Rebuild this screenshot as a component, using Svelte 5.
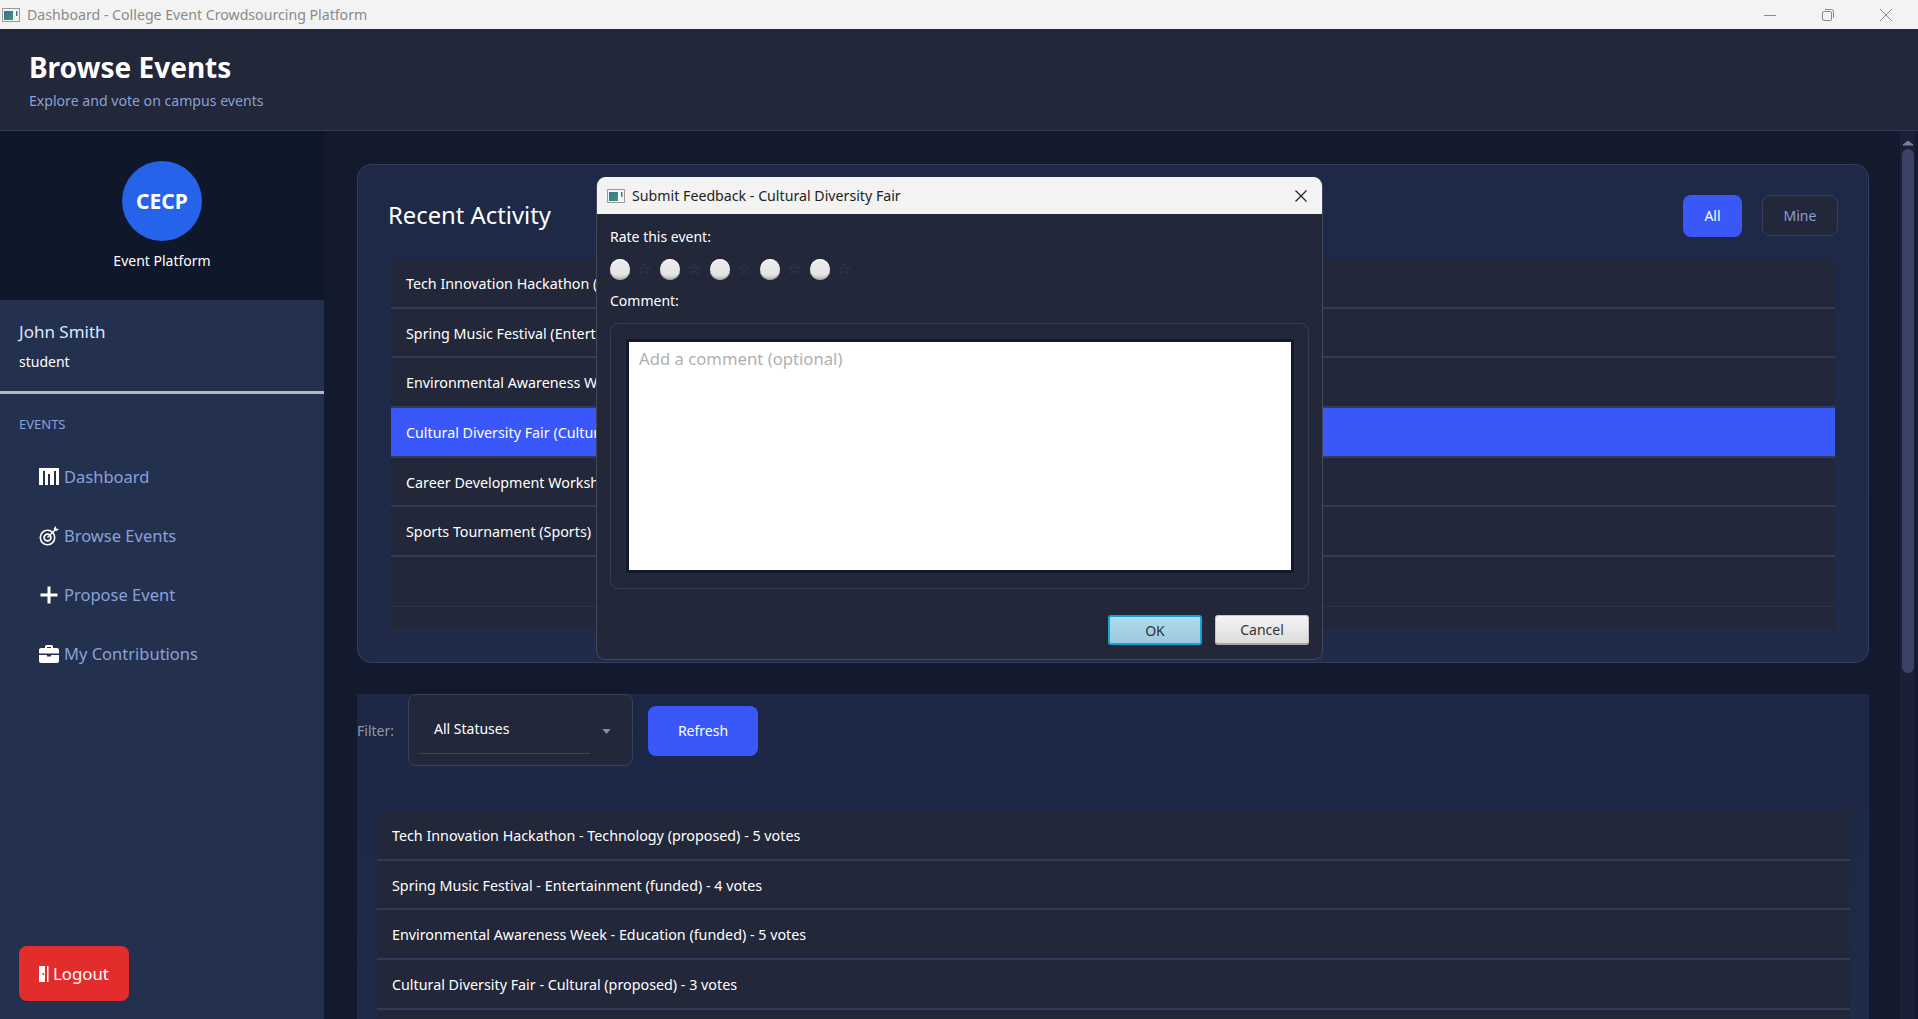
<script>
  const recent = [
    'Tech Innovation Hackathon (Technology)',
    'Spring Music Festival (Entertainment)',
    'Environmental Awareness Week (Education)',
    'Cultural Diversity Fair (Cultural)',
    'Career Development Workshop (Education)',
    'Sports Tournament (Sports)',
    ''
  ];
  const events = [
    'Tech Innovation Hackathon - Technology (proposed) - 5 votes',
    'Spring Music Festival - Entertainment (funded) - 4 votes',
    'Environmental Awareness Week - Education (funded) - 5 votes',
    'Cultural Diversity Fair - Cultural (proposed) - 3 votes',
    ''
  ];
  const stars = [1, 2, 3, 4, 5];
</script>

{#snippet appIcon()}
  <svg class="appicon" viewBox="0 0 18 14" width="18" height="14">
    <defs>
      <linearGradient id="ai" x1="0" y1="0" x2="1" y2="1">
        <stop offset="0" stop-color="#3a6ea5" />
        <stop offset="1" stop-color="#3f9a6a" />
      </linearGradient>
    </defs>
    <rect x="0.5" y="0.5" width="17" height="13" fill="#f4f4f4" stroke="#9a9a9a" />
    <rect x="2" y="3" width="9" height="9" fill="url(#ai)" />
    <rect x="14" y="3" width="1.5" height="5" fill="#3f7a8a" />
  </svg>
{/snippet}

<div class="window">
  <div class="titlebar">
    {@render appIcon()}
    <span class="wintitle">Dashboard - College Event Crowdsourcing Platform</span>
    <div class="winctl">
      <svg width="14" height="14" viewBox="0 0 14 14"><path d="M1 7.5h12" stroke="#8a8a8a" fill="none" /></svg>
      <svg width="14" height="14" viewBox="0 0 14 14"><rect x="1.5" y="3.5" width="9" height="9" rx="1.5" stroke="#8a8a8a" fill="none" /><path d="M4 1.5h6.5a2 2 0 0 1 2 2V10" stroke="#8a8a8a" fill="none" /></svg>
      <svg width="14" height="14" viewBox="0 0 14 14"><path d="M1 1l12 12M13 1L1 13" stroke="#8a8a8a" fill="none" /></svg>
    </div>
  </div>

  <header class="header">
    <h1>Browse Events</h1>
    <p>Explore and vote on campus events</p>
  </header>

  <div class="body">
    <aside class="sidebar">
      <div class="brand">
        <div class="logo">CECP</div>
        <div class="brandname">Event Platform</div>
      </div>
      <div class="user">
        <div class="uname">John Smith</div>
        <div class="urole">student</div>
      </div>
      <div class="section">EVENTS</div>
      <nav class="nav">
        <div class="navitem">
          <svg viewBox="0 0 20 17" width="20" height="17"><path fill="#fff" d="M0 0h20v17h-3V3h-2v14h-4V6H9v11H6V3H4v14H0z" /></svg>
          <span>Dashboard</span>
        </div>
        <div class="navitem">
          <svg viewBox="0 0 20 20" width="20" height="20"><circle cx="8.500" cy="11.500" r="7.200" fill="none" stroke="#fff" stroke-width="1.600" /><circle cx="8.500" cy="11.500" r="3.400" fill="none" stroke="#fff" stroke-width="1.800" /><path d="M8.500 11.500L16 4" stroke="#fff" stroke-width="1.400" /><path d="M14.500 3l2-3 .8 2.500 2.700.8-3 2z" fill="#fff" /></svg>
          <span>Browse Events</span>
        </div>
        <div class="navitem">
          <svg viewBox="0 0 20 20" width="20" height="20"><path fill="#fff" d="M8.500 1.500h3V8.500H18.500v3H11.500V18.500h-3V11.500H1.500v-3H8.500z" /></svg>
          <span>Propose Event</span>
        </div>
        <div class="navitem">
          <svg viewBox="0 0 20 18" width="20" height="18"><path fill="#fff" d="M6 3V1.500A1.500 1.500 0 0 1 7.500 0h5A1.500 1.500 0 0 1 14 1.500V3h4a2 2 0 0 1 2 2v3.500H0V5a2 2 0 0 1 2-2zm2 0h4V2H8zM0 10h8v1.500h4V10h8v6a2 2 0 0 1-2 2H2a2 2 0 0 1-2-2z" /></svg>
          <span>My Contributions</span>
        </div>
      </nav>
      <button class="logout">
        <svg viewBox="0 0 10 16" width="10" height="16"><path fill="#fff" d="M0 0h6v16H0zM8 0h1.500v16H8z" /><rect x="3.500" y="7" width="1.500" height="2" fill="#e32d2d" /></svg>
        <span>Logout</span>
      </button>
    </aside>

    <main class="main">
      <div class="content">
        <section class="card">
          <div class="cardhead">
            <h2>Recent Activity</h2>
            <div class="toggles">
              <button class="primary all">All</button>
              <button class="ghost">Mine</button>
            </div>
          </div>
          <ul class="list recent">
            {#each recent as r, i}
              <li class:sel={i === 3}>{r}</li>
            {/each}
          </ul>
        </section>

        <section class="events">
          <div class="filter">
            <span class="flabel">Filter:</span>
            <div class="select">
              <div class="selval"><span>All Statuses</span></div>
              <svg class="caret" width="9" height="5" viewBox="0 0 10 6"><path d="M0 0h10L5 6z" fill="#8b8f9e" /></svg>
            </div>
            <button class="primary refresh">Refresh</button>
          </div>
          <ul class="list evlist">
            {#each events as e}
              <li>{e}</li>
            {/each}
          </ul>
        </section>
      </div>
      <div class="scrollbar">
        <svg width="12" height="8" viewBox="0 0 12 8"><path d="M1 7l5-4 5 4z" fill="#7c8094" stroke="#7c8094" /></svg>
        <div class="thumb"></div>
      </div>
    </main>
  </div>

  <div class="dialog">
    <div class="dtitle">
      {@render appIcon()}
      <span>Submit Feedback - Cultural Diversity Fair</span>
      <svg class="dclose" width="14" height="14" viewBox="0 0 14 14"><path d="M1.500 1.500l11 11M12.500 1.500l-11 11" stroke="#222" stroke-width="1.200" fill="none" /></svg>
    </div>
    <div class="dbody">
      <div class="dlabel">Rate this event:</div>
      <div class="stars">
        {#each stars as s}
          <div class="star"><span class="radio"></span><span class="glyph">☆</span></div>
        {/each}
      </div>
      <div class="dlabel comment">Comment:</div>
      <div class="cbox">
        <div class="ta">Add a comment (optional)</div>
      </div>
      <div class="dbtns">
        <button class="ok">OK</button>
        <button class="cancel">Cancel</button>
      </div>
    </div>
  </div>
</div>

<style>
  :global(body) {
    margin: 0;
    overflow: hidden;
    background: #141a2e;
  }
  * {
    box-sizing: border-box;
  }
  .window {
    position: relative;
    width: 1918px;
    height: 1019px;
    display: flex;
    flex-direction: column;
    overflow: hidden;
    font-family: "Noto Sans", "Open Sans", sans-serif;
    color: #fff;
    font-size: 14px;
  }
  .titlebar {
    height: 29px;
    flex: none;
    background: #f3f3f3;
    display: flex;
    align-items: center;
    padding-left: 2px;
    gap: 7px;
    color: #8a8a8a;
    font-size: 14.150px;
  }
  .appicon {
    flex: none;
  }
  .winctl {
    margin-left: auto;
    display: flex;
    gap: 44px;
    margin-right: 25px;
  }
  .header {
    height: 102px;
    flex: none;
    background: #222739;
    border-bottom: 1px solid #333a5a;
    padding: 19px 29px 0;
  }
  h1 {
    margin: 0;
    font-size: 28px;
    line-height: 38px;
    font-weight: 700;
  }
  .header p {
    margin: 5px 0 0;
    font-size: 14.100px;
    line-height: 20px;
    color: #8aa0d8;
  }
  .body {
    flex: 1;
    display: flex;
    min-height: 0;
  }
  .sidebar {
    width: 324px;
    flex: none;
    background: #23314f;
    display: flex;
    flex-direction: column;
    padding-bottom: 18px;
  }
  .brand {
    height: 169px;
    flex: none;
    background: #0f172a;
    display: flex;
    flex-direction: column;
    align-items: center;
    padding-top: 30px;
  }
  .logo {
    width: 80px;
    height: 80px;
    border-radius: 50%;
    background: #2563eb;
    display: flex;
    align-items: center;
    justify-content: center;
    font-weight: 700;
    font-size: 21px;
  }
  .brandname {
    margin-top: 10px;
    font-size: 14px;
    line-height: 20px;
  }
  .user {
    height: 94px;
    flex: none;
    border-bottom: 3px solid #b4b8c0;
    padding: 20px 19px 0;
  }
  .uname {
    font-size: 17px;
    line-height: 24px;
    color: #dbe7ff;
  }
  .urole {
    margin-top: 8px;
    font-size: 14px;
    line-height: 20px;
  }
  .section {
    margin: 21px 19px 0;
    font-size: 13px;
    line-height: 18px;
    color: #8aa0d8;
  }
  .nav {
    margin-top: 14px;
    display: flex;
    flex-direction: column;
    flex: 1;
  }
  .navitem {
    height: 59px;
    display: flex;
    align-items: center;
    padding-left: 39px;
    gap: 5px;
    font-size: 16.500px;
    color: #8aa0d8;
  }
  .logout {
    align-self: flex-start;
    margin-left: 19px;
    width: 110px;
    height: 55px;
    border: 0;
    border-radius: 8px;
    background: #e32d2d;
    color: #fff;
    font: inherit;
    font-size: 16.800px;
    display: flex;
    align-items: center;
    justify-content: center;
    gap: 4px;
  }
  .main {
    flex: 1;
    display: flex;
    min-width: 0;
    background: #141a2e;
  }
  .content {
    flex: 1;
    min-width: 0;
    padding: 33px 0 0 33px;
    display: flex;
    flex-direction: column;
    gap: 31px;
  }
  .card {
    height: 499px;
    flex: none;
    border: 1px solid #333c5e;
    border-radius: 14px;
    background: linear-gradient(180deg, #1d2947, #1f2b49);
    padding: 0 33px;
  }
  .cardhead {
    height: 94px;
    display: flex;
    align-items: flex-start;
    justify-content: space-between;
  }
  h2 {
    margin: 33px 0 0 -3px;
    font-size: 23.800px;
    line-height: 34px;
    font-weight: 400;
  }
  .toggles {
    display: flex;
    gap: 20px;
    margin: 30px -3px 0 0;
  }
  button {
    font: inherit;
  }
  .primary {
    border: 0;
    background: #3a57fa;
    color: #fff;
    border-radius: 8px;
    padding: 0 0 2px;
  }
  .all {
    width: 59px;
    height: 42px;
  }
  .ghost {
    width: 76px;
    height: 41px;
    background: #222739;
    border: 1px solid #353c5c;
    border-radius: 8px;
    color: #8aa0d8;
  }
  .list {
    list-style: none;
    margin: 0;
    padding: 0;
    background: #222739;
  }
  .list li {
    height: 49.700px;
    display: flex;
    align-items: center;
    padding: 1px 0 0 15px;
    border-bottom: 2px solid #333a5a;
    font-size: 14.300px;
  }
  .recent {
    height: 370px;
    overflow: hidden;
  }
  .recent li:last-child {
    border-bottom: 1px solid #2c3248;
  }
  .list li.sel {
    background: #3a57fa;
  }
  .events {
    flex: 1;
    background: linear-gradient(180deg, #1b2744, #1f2b49);
    min-height: 0;
    overflow: hidden;
    position: relative;
  }
  .filter {
    display: flex;
    align-items: center;
    height: 72px;
  }
  .flabel {
    width: 51px;
    color: #8f97ad;
    font-size: 14px;
  }
  .select {
    width: 225px;
    height: 72px;
    background: #222739;
    border: 1px solid #3a4060;
    border-radius: 8px;
    position: relative;
    padding: 10px 10px;
  }
  .selval {
    width: 171px;
    height: 49px;
    border-bottom: 1px solid #3a4060;
    padding: 14px 15px 0;
    font-size: 14px;
  }
  .caret {
    position: absolute;
    right: 21px;
    top: 34px;
  }
  .refresh {
    margin: 2px 0 0 15px;
    width: 110px;
    height: 50px;
    font-size: 14px;
  }
  .evlist {
    margin: 45px 19px 0 20px;
  }
  .scrollbar {
    width: 15px;
    margin: 0 3px 0 31px;
    flex: none;
    display: flex;
    flex-direction: column;
    align-items: center;
    background: #1b2036;
    padding-top: 3px;
  }
  .scrollbar svg {
    margin-top: 4px;
  }
  .thumb {
    margin-top: 3px;
    width: 12px;
    height: 524px;
    border-radius: 6px;
    background: #3b4266;
  }
  .dialog {
    position: absolute;
    left: 596px;
    top: 177px;
    width: 727px;
    height: 483px;
    border-radius: 9px;
    border: 1px solid #44485a;
    border-top: 0;
    background: #222739;
    overflow: hidden;
    display: flex;
    flex-direction: column;
  }
  .dtitle {
    height: 37px;
    flex: none;
    background: #f3f3f3;
    color: #222;
    display: flex;
    align-items: center;
    padding: 0 14px 0 10px;
    gap: 7px;
    font-size: 14.200px;
  }
  .dclose {
    margin-left: auto;
  }
  .dbody {
    flex: 1;
    padding: 13px 13px 0;
    display: flex;
    flex-direction: column;
  }
  .dlabel {
    font-size: 14px;
    line-height: 20px;
  }
  .stars {
    display: flex;
    margin-top: 11px;
    height: 22px;
    align-items: center;
  }
  .star {
    width: 50px;
    display: flex;
    align-items: center;
    gap: 7px;
  }
  .radio {
    width: 20px;
    height: 21px;
    border-radius: 50%;
    background: linear-gradient(180deg, #ececec 0%, #e4e4e4 75%, #b4b4b4 100%);
    box-shadow: inset 0 -1px 1px #a0a0a0, inset 0 1px 2px #fff;
  }
  .glyph {
    color: #3a3f50;
    font-family: "DejaVu Sans", sans-serif;
    font-size: 16px;
    line-height: 1;
  }
  .comment {
    margin-top: 11px;
  }
  .cbox {
    margin-top: 12px;
    height: 266px;
    border: 1px solid #353c5c;
    border-radius: 8px;
    padding: 15px 14px 15px 15px;
  }
  .ta {
    height: 100%;
    background: #fff;
    border: 3px solid #141a2e;
    color: #b0b0b0;
    font-size: 16.700px;
    padding: 3px 10px;
    line-height: 28px;
  }
  .dbtns {
    display: flex;
    justify-content: flex-end;
    gap: 13px;
    margin-top: 26px;
  }
  .dbtns button {
    width: 94px;
    height: 30px;
    border-radius: 3px;
    font-size: 14px;
    color: #333;
    padding: 0;
  }
  .ok {
    background: linear-gradient(180deg, #aedcf0, #9cc9dc);
    border: 2px solid #1aa3d8;
  }
  .cancel {
    background: linear-gradient(180deg, #f4f4f4, #dcdcdc);
    border: 1px solid #c4c4c4;
    border-bottom: 2px solid #a8a8a8;
  }
</style>
